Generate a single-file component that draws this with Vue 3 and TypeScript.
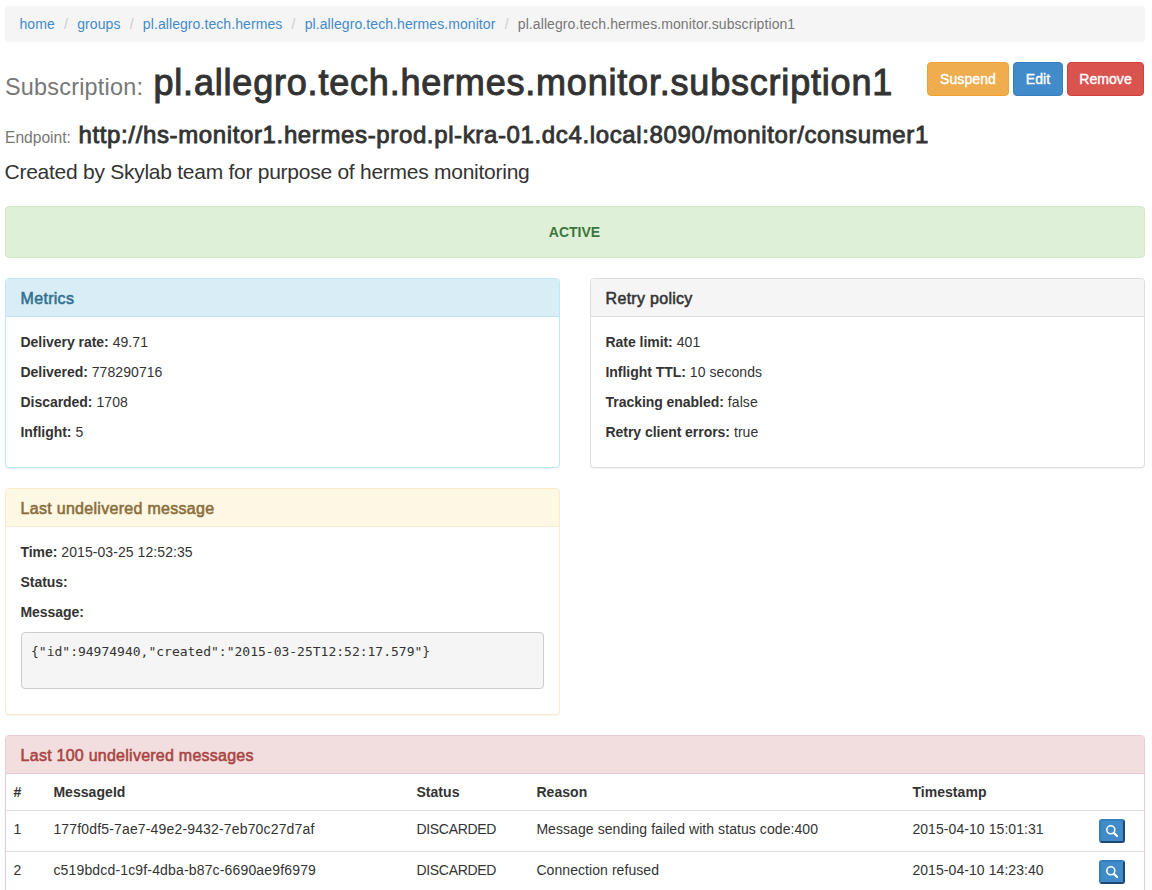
<script setup lang="ts">
interface Crumb { label: string; link: boolean }
interface Field { name: string; value: string }
interface Failure { id: string; status: string; reason: string; timestamp: string }

const crumbs: Crumb[] = [
  { label: 'home', link: true },
  { label: 'groups', link: true },
  { label: 'pl.allegro.tech.hermes', link: true },
  { label: 'pl.allegro.tech.hermes.monitor', link: true },
  { label: 'pl.allegro.tech.hermes.monitor.subscription1', link: false },
]

const metrics: Field[] = [
  { name: 'Delivery rate:', value: '49.71' },
  { name: 'Delivered:', value: '778290716' },
  { name: 'Discarded:', value: '1708' },
  { name: 'Inflight:', value: '5' },
]

const retryPolicy: Field[] = [
  { name: 'Rate limit:', value: '401' },
  { name: 'Inflight TTL:', value: '10 seconds' },
  { name: 'Tracking enabled:', value: 'false' },
  { name: 'Retry client errors:', value: 'true' },
]

const lastMessage: Field[] = [
  { name: 'Time:', value: '2015-03-25 12:52:35' },
  { name: 'Status:', value: '' },
  { name: 'Message:', value: '' },
]

const payload = '{"id":94974940,"created":"2015-03-25T12:52:17.579"}'

const failures: Failure[] = [
  { id: '177f0df5-7ae7-49e2-9432-7eb70c27d7af', status: 'DISCARDED', reason: 'Message sending failed with status code:400', timestamp: '2015-04-10 15:01:31' },
  { id: 'c519bdcd-1c9f-4dba-b87c-6690ae9f6979', status: 'DISCARDED', reason: 'Connection refused', timestamp: '2015-04-10 14:23:40' },
]
</script>

<template>
  <main class="page">
    <ol class="breadcrumb">
      <li v-for="c in crumbs" :key="c.label">
        <a v-if="c.link" href="#">{{ c.label }}</a>
        <span v-else>{{ c.label }}</span>
      </li>
    </ol>

    <header class="header">
      <div class="titles">
        <h1><small>Subscription:</small><span>pl.allegro.tech.hermes.monitor.subscription1</span></h1>
        <h3><small>Endpoint:</small><span>http://hs-monitor1.hermes-prod.pl-kra-01.dc4.local:8090/monitor/consumer1</span></h3>
        <p class="lead">Created by Skylab team for purpose of hermes monitoring</p>
      </div>
      <div class="actions">
        <button class="btn warning">Suspend</button>
        <button class="btn primary">Edit</button>
        <button class="btn danger">Remove</button>
      </div>
    </header>

    <div class="alert"><strong>ACTIVE</strong></div>

    <div class="grid">
      <section class="panel info">
        <h2>Metrics</h2>
        <div class="body">
          <p v-for="f in metrics" :key="f.name"><strong>{{ f.name }}</strong> {{ f.value }}</p>
        </div>
      </section>
      <section class="panel">
        <h2>Retry policy</h2>
        <div class="body">
          <p v-for="f in retryPolicy" :key="f.name"><strong>{{ f.name }}</strong> {{ f.value }}</p>
        </div>
      </section>
      <section class="panel caution">
        <h2>Last undelivered message</h2>
        <div class="body">
          <p v-for="f in lastMessage" :key="f.name"><strong>{{ f.name }}</strong> {{ f.value }}</p>
          <pre>{{ payload }}</pre>
        </div>
      </section>
    </div>

    <section class="panel failed">
      <h2>Last 100 undelivered messages</h2>
      <table>
        <colgroup>
          <col class="c-num"><col class="c-id"><col class="c-status"><col class="c-reason"><col class="c-time"><col>
        </colgroup>
        <thead>
          <tr><th>#</th><th>MessageId</th><th>Status</th><th>Reason</th><th>Timestamp</th><th></th></tr>
        </thead>
        <tbody>
          <tr v-for="(m, i) in failures" :key="m.id">
            <td>{{ i + 1 }}</td>
            <td class="uuid">{{ m.id }}</td>
            <td class="status">{{ m.status }}</td>
            <td>{{ m.reason }}</td>
            <td>{{ m.timestamp }}</td>
            <td class="action">
              <button class="search" aria-label="Show message">
                <svg viewBox="0 0 12 12" width="12" height="12">
                  <circle cx="4.8" cy="4.8" r="4" fill="none" stroke="#fff" stroke-width="1.6" />
                  <path d="M8 8 L11 11" stroke="#fff" stroke-width="2.1" stroke-linecap="round" />
                </svg>
              </button>
            </td>
          </tr>
        </tbody>
      </table>
    </section>
  </main>
</template>

<style>
html, body { margin: 0; height: 890px; overflow: hidden; background: #fff; }
</style>

<style scoped>
* { box-sizing: border-box; }
.page {
  width: 1140px;
  margin-left: 5px;
  padding-top: 6px;
  font: 14px/20px "Liberation Sans", Arial, sans-serif;
  letter-spacing: 0.07px;
  color: #333;
}
.breadcrumb {
  display: flex;
  height: 36px;
  margin: 0;
  padding: 8px 14.5px;
  list-style: none;
  background: #f5f5f5;
  border-radius: 4px;
  color: #777;
  letter-spacing: 0.08px;
}
.breadcrumb li + li::before { content: "/"; padding: 0 9.2px; color: #ccc; }
a { color: #428bca; text-decoration: none; }

.header { display: flex; height: 164px; }
.titles { flex: 1; min-width: 0; white-space: nowrap; }
h1, h3, h2 { margin: 0; font-weight: 400; }
h1 { display: flex; align-items: baseline; margin-top: 21px; font-size: 36px; line-height: 40px; }
h1 span { letter-spacing: 0.8px; -webkit-text-stroke: 1px #333; }
h1 small { flex: none; width: 148.5px; font-size: 23.4px; letter-spacing: 0.23px; color: #777; }
h3 { display: flex; align-items: baseline; margin-top: 15px; font-size: 24px; line-height: 26px; }
h3 span { letter-spacing: 0.63px; -webkit-text-stroke: 0.85px #333; }
h3 small { flex: none; width: 73.5px; font-size: 15.6px; letter-spacing: 0; color: #777; }
.lead { margin: 6px 0 0 -0.5px; font-size: 21px; line-height: 30px; letter-spacing: -0.26px; }

.actions { display: flex; gap: 4px; margin: 20px 1px 0 0; }
.btn {
  height: 34px;
  padding: 0;
  border: 1px solid;
  border-radius: 4px;
  font: 14px/20px "Liberation Sans", Arial, sans-serif;
  letter-spacing: 0.08px;
  color: #fff;
  -webkit-text-stroke: 0.4px #fff;
}
.btn.warning { width: 82px; background: #f0ad4e; border-color: #eea236; }
.btn.primary { width: 50px; background: #428bca; border-color: #357ebd; }
.btn.danger { width: 77px; background: #d9534f; border-color: #d43f3a; }

.alert {
  height: 52px;
  margin-bottom: 20px;
  padding: 15px 16px 15px 15px;
  border: 1px solid #d6e9c6;
  border-radius: 4px;
  background: #dff0d8;
  color: #3c763d;
  text-align: center;
}
.grid { display: grid; grid-template-columns: 555px 555px; gap: 20px 30px; margin-bottom: 20px; }
.panel {
  border: 1px solid #ddd;
  border-radius: 4px;
  background: #fff;
  box-shadow: 0 1px 1px rgba(0, 0, 0, 0.05);
}
.panel h2 {
  height: 38px;
  padding: 11px 14.6px 9px;
  border-bottom: 1px solid #ddd;
  border-radius: 3px 3px 0 0;
  background: #f5f5f5;
  font-size: 16px;
  line-height: 18px;
  letter-spacing: 0.29px;
  -webkit-text-stroke: 0.55px currentColor;
}
.body { padding: 15px 15px 20px; }
.body p { margin: 0 0 10px -0.5px; }
.grid .panel:not(.caution) { height: 190px; }
.caution { height: 227px; }
strong { letter-spacing: -0.04px; }
th { letter-spacing: 0.05px; }
.alert strong { letter-spacing: 0; }
.info, .info h2 { border-color: #bce8f1; }
.info h2 { background: #d9edf7; color: #31708f; }
.caution, .caution h2 { border-color: #faebcc; }
.caution h2 { background: #fcf8e3; color: #8a6d3b; }
.failed, .failed h2 { border-color: #ebccd1; }
.failed h2 { background: #f2dede; color: #a94442; letter-spacing: 0.25px; }
pre {
  height: 57px;
  margin: 0;
  padding: 9.5px 9px;
  border: 1px solid #ccc;
  border-radius: 4px;
  background: #f5f5f5;
  font: 13px/18.57px "DejaVu Sans Mono", monospace;
  letter-spacing: 0;
}
table { width: 100%; table-layout: fixed; border-collapse: collapse; }
.c-num { width: 40px; }
.c-id { width: 363px; }
.c-status { width: 120px; }
.c-reason { width: 376px; }
.c-time { width: 187px; }
th, td { padding: 8px 7.4px; text-align: left; vertical-align: top; white-space: nowrap; }
tbody tr { height: 41px; }
td { border-top: 1px solid #ddd; }
.uuid { letter-spacing: 0.16px; }
.status { letter-spacing: -0.3px; }
.action { padding-left: 7px; }
.search {
  display: flex;
  align-items: center;
  justify-content: center;
  width: 26px;
  height: 24px;
  padding: 0;
  border: 2px solid;
  border-color: #357ebd #1c4770 #1c4770 #357ebd;
  border-radius: 3px;
  background: #428bca;
}
</style>
